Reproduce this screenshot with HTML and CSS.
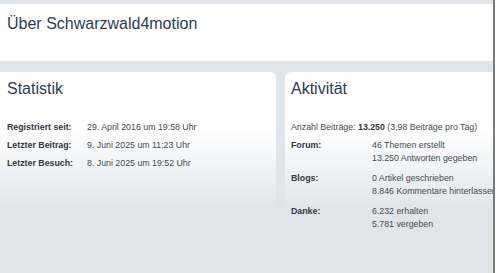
FILE: index.html
```html
<!DOCTYPE html>
<html lang="de">
<head>
    <meta charset="UTF-8">
    <title>Über Schwarzwald4motion</title>
    <meta name="viewport" content="width=device-width, initial-scale=1.0">
    <link rel="stylesheet" href="styles.css">
</head>
<body>
    <div class="frame">
        <div class="page">
            <div class="header-box">
                <h1>Über Schwarzwald4motion</h1>
            </div>
            <div class="panels">
                <section class="panel">
                    <h2>Statistik</h2>
                    <dl class="stats">
                        <dt>Registriert seit:</dt>
                        <dd>29. April 2016 um 19:58 Uhr</dd>
                        <dt>Letzter Beitrag:</dt>
                        <dd>9. Juni 2025 um 11:23 Uhr</dd>
                        <dt>Letzter Besuch:</dt>
                        <dd>8. Juni 2025 um 19:52 Uhr</dd>
                    </dl>
                </section>
                <section class="panel">
                    <h2>Aktivität</h2>
                    <p class="summary">Anzahl Beiträge: <b>13.250</b> (3,98 Beiträge pro Tag)</p>
                    <dl class="activity">
                        <dt>Forum:</dt>
                        <dd>46 Themen erstellt<br>13.250 Antworten gegeben</dd>
                        <dt>Blogs:</dt>
                        <dd>0 Artikel geschrieben<br>8.846 Kommentare hinterlassen</dd>
                        <dt>Danke:</dt>
                        <dd>6.232 erhalten<br>5.781 vergeben</dd>
                    </dl>
                </section>
            </div>
        </div>
    </div>
</body>
</html>
```

FILE: styles.css
```css
html, body { margin: 0; padding: 0; background: #fff; }
body { font-family: "Liberation Sans", Arial, sans-serif; color: #464b50; }
.frame { width: 493px; min-height: 273px; border-right: 2px solid #7a7a7a; }
.page { background: #e0e5e9; padding: 4px 0 7px; }
.header-box { background: #fff; height: 57px; padding: 0 7px; box-sizing: border-box; }
h1 { margin: 0; padding-top: 10px; font-size: 16px; line-height: 20px; font-weight: normal; color: #2c3e50; }
.panels { display: grid; grid-template-columns: 276px 1fr; gap: 9px; margin-top: 11px; height: 194px; }
.panel { background: linear-gradient(#fff 0%, #fff 30%, #e0e5e9 72%); border-radius: 0 6px 0 0; padding: 7px 7px; overflow: hidden; }
.panel + .panel { border-radius: 6px 0 0 0; padding-left: 6px; }
h2 { margin: 0; font-size: 16px; line-height: 20px; font-weight: normal; color: #2c3e50; }
.stats { display: grid; grid-template-columns: 80px 1fr; row-gap: 6px; margin: 22px 0 0; font-size: 8.8px; line-height: 12px; }
dt { font-weight: bold; color: #33383d; }
dd { margin: 0; }
.summary { margin: 22px 0 6px; font-size: 8.8px; line-height: 12px; white-space: nowrap; }
.summary b { color: #33383d; }
.activity { display: grid; grid-template-columns: 81px 1fr; row-gap: 7px; margin: 0; font-size: 8.8px; line-height: 13px; white-space: nowrap; }
```
